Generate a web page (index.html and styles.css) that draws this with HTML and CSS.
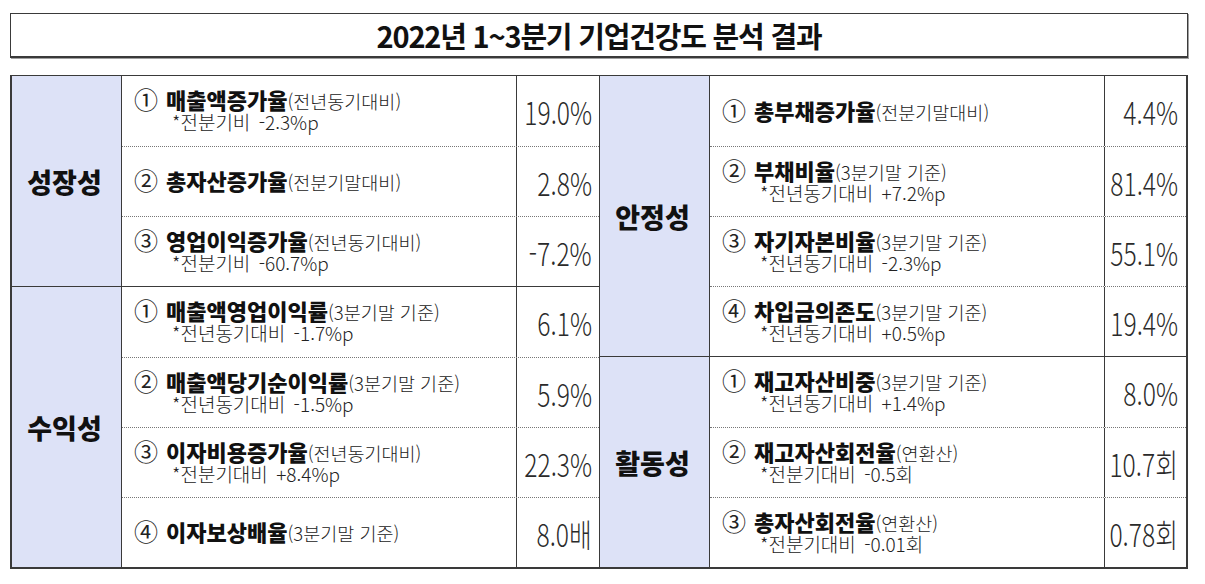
FILE: index.html
```html
<!DOCTYPE html>
<html lang="ko">
<head>
<meta charset="utf-8">
<title>2022년 1~3분기 기업건강도 분석 결과</title>
<link rel="stylesheet" href="styles.css">
</head>
<body>
<div class="page">
  <div class="title">2022년 1~3분기 기업건강도 분석 결과</div>
  <div class="table">
    <div class="half half-left">
      <div class="group">
        <div class="cat">성장성</div>
        <div class="rows">
          <div class="row">
            <div class="item"><div class="main"><span class="num">①</span><b>매출액증가율</b><span class="note">(전년동기대비)</span></div><div class="sub">*전분기비 -2.3%p</div></div>
            <div class="val"><span>19.0%</span></div>
          </div>
          <div class="row">
            <div class="item"><div class="main"><span class="num">②</span><b>총자산증가율</b><span class="note">(전분기말대비)</span></div></div>
            <div class="val"><span>2.8%</span></div>
          </div>
          <div class="row">
            <div class="item"><div class="main"><span class="num">③</span><b>영업이익증가율</b><span class="note">(전년동기대비)</span></div><div class="sub">*전분기비 -60.7%p</div></div>
            <div class="val"><span>-7.2%</span></div>
          </div>
        </div>
      </div>
      <div class="group">
        <div class="cat">수익성</div>
        <div class="rows">
          <div class="row">
            <div class="item"><div class="main"><span class="num">①</span><b>매출액영업이익률</b><span class="note">(3분기말 기준)</span></div><div class="sub">*전년동기대비 -1.7%p</div></div>
            <div class="val"><span>6.1%</span></div>
          </div>
          <div class="row">
            <div class="item"><div class="main"><span class="num">②</span><b>매출액당기순이익률</b><span class="note">(3분기말 기준)</span></div><div class="sub">*전년동기대비 -1.5%p</div></div>
            <div class="val"><span>5.9%</span></div>
          </div>
          <div class="row">
            <div class="item"><div class="main"><span class="num">③</span><b>이자비용증가율</b><span class="note">(전년동기대비)</span></div><div class="sub">*전분기대비 +8.4%p</div></div>
            <div class="val"><span>22.3%</span></div>
          </div>
          <div class="row">
            <div class="item"><div class="main"><span class="num">④</span><b>이자보상배율</b><span class="note">(3분기말 기준)</span></div></div>
            <div class="val"><span>8.0배</span></div>
          </div>
        </div>
      </div>
    </div>
    <div class="half half-right">
      <div class="group">
        <div class="cat">안정성</div>
        <div class="rows">
          <div class="row">
            <div class="item"><div class="main"><span class="num">①</span><b>총부채증가율</b><span class="note">(전분기말대비)</span></div></div>
            <div class="val"><span>4.4%</span></div>
          </div>
          <div class="row">
            <div class="item"><div class="main"><span class="num">②</span><b>부채비율</b><span class="note">(3분기말 기준)</span></div><div class="sub">*전년동기대비 +7.2%p</div></div>
            <div class="val"><span>81.4%</span></div>
          </div>
          <div class="row">
            <div class="item"><div class="main"><span class="num">③</span><b>자기자본비율</b><span class="note">(3분기말 기준)</span></div><div class="sub">*전년동기대비 -2.3%p</div></div>
            <div class="val"><span>55.1%</span></div>
          </div>
          <div class="row">
            <div class="item"><div class="main"><span class="num">④</span><b>차입금의존도</b><span class="note">(3분기말 기준)</span></div><div class="sub">*전년동기대비 +0.5%p</div></div>
            <div class="val"><span>19.4%</span></div>
          </div>
        </div>
      </div>
      <div class="group">
        <div class="cat">활동성</div>
        <div class="rows">
          <div class="row">
            <div class="item"><div class="main"><span class="num">①</span><b>재고자산비중</b><span class="note">(3분기말 기준)</span></div><div class="sub">*전년동기대비 +1.4%p</div></div>
            <div class="val"><span>8.0%</span></div>
          </div>
          <div class="row">
            <div class="item"><div class="main"><span class="num">②</span><b>재고자산회전율</b><span class="note">(연환산)</span></div><div class="sub">*전분기대비 -0.5회</div></div>
            <div class="val"><span>10.7회</span></div>
          </div>
          <div class="row">
            <div class="item"><div class="main"><span class="num">③</span><b>총자산회전율</b><span class="note">(연환산)</span></div><div class="sub">*전분기대비 -0.01회</div></div>
            <div class="val"><span>0.78회</span></div>
          </div>
        </div>
      </div>
    </div>
  </div>
</div>
</body>
</html>
```

FILE: styles.css
```css
* {
  box-sizing: border-box;
  margin: 0;
  padding: 0;
}

body {
  background: #ffffff;
  font-family: "Noto Sans CJK KR", "Noto Sans", sans-serif;
  color: #111111;
}

.page {
  width: 1205px;
  padding: 13px 0 0 10px;
}

.title {
  width: 1178px;
  height: 45px;
  border: 1px solid #3a3a3a;
  border-bottom-width: 2px;
  box-shadow: 1px 1px 0 #a0a0a0;
  display: flex;
  align-items: center;
  justify-content: center;
  font-size: 29px;
  font-weight: 700;
  letter-spacing: -1.2px;
  color: #111111;
}

.table {
  margin-top: 17px;
  width: 1178px;
  border: 2px solid #3a3a3a;
  border-top-width: 1px;
  display: flex;
}

.half {
  display: flex;
  flex-direction: column;
}

.half-left {
  width: 588px;
  border-right: 1px solid #3a3a3a;
}

.half-right {
  flex: 1;
}

.group {
  display: flex;
}

.group + .group {
  border-top: 1px solid #3a3a3a;
}

.cat {
  width: 110px;
  flex: none;
  border-right: 1px solid #3a3a3a;
  background: #dde2f7;
  display: flex;
  align-items: center;
  justify-content: center;
  padding-right: 4px;
  font-size: 27px;
  font-weight: 900;
  color: #111111;
}

.rows {
  flex: 1;
  display: flex;
  flex-direction: column;
}

.row {
  height: 70px;
  display: flex;
}

.row + .row {
  border-top: 1px dotted #777777;
}

.item {
  flex: 1;
  display: flex;
  flex-direction: column;
  justify-content: center;
  padding-left: 12px;
  padding-bottom: 3px;
  white-space: nowrap;
}

.main {
  font-size: 22px;
  line-height: 24px;
}

.main b {
  font-weight: 900;
  color: #111111;
}

.num {
  display: inline-block;
  margin-right: 8px;
  font-size: 24px;
  line-height: 20px;
  font-weight: 400;
  color: #222222;
}

.note {
  font-size: 18.5px;
  line-height: 18px;
  font-weight: 300;
  color: #222222;
}

.sub {
  padding-left: 38px;
  font-size: 19px;
  line-height: 21px;
  font-weight: 300;
  color: #222222;
  word-spacing: 3px;
}

.val {
  width: 83px;
  flex: none;
  border-left: 1px solid #3a3a3a;
  display: flex;
  align-items: center;
  justify-content: flex-end;
  padding-right: 7px;
  font-size: 32px;
  font-weight: 300;
  color: #2a2a2a;
  white-space: nowrap;
}

.half-right .val {
  width: 82px;
  padding-right: 8px;
}

.val span {
  display: inline-block;
  transform: scaleX(0.77);
  transform-origin: right center;
}
```
